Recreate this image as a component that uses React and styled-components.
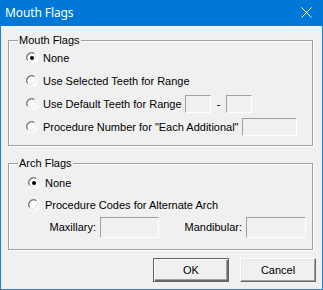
import React from "react";
import styled, { createGlobalStyle } from "styled-components";

const GlobalStyle = createGlobalStyle`
  html, body {
    margin: 0;
    padding: 0;
    background: #f0f0f0;
  }
  * {
    box-sizing: border-box;
  }
`;

const Radio = ({ checked }) => (
  <RadioBox>
    <svg width="12" height="12" viewBox="0 0 12 12">
      <path d="M0.5 7.5 A5.5 5.5 0 0 1 7.5 0.5" fill="none" stroke="#a0a0a0" strokeWidth="1" />
      <path d="M1 6 A5 5 0 0 1 6 1" fill="none" stroke="#a0a0a0" />
      <circle cx="6" cy="6" r="5" fill="#fff" />
      <path d="M1.6 8.5 A5 5 0 0 1 8.5 1.6" fill="none" stroke="#696969" strokeWidth="1" />
      <path d="M1.5 9 A5.5 5.5 0 0 0 9 1.5" fill="none" stroke="#e3e3e3" strokeWidth="1" />
      <path d="M1 10.5 A6 6 0 0 0 10.5 1" fill="none" stroke="#fff" strokeWidth="1" />
      {checked && <circle cx="6" cy="6" r="2" fill="#000" />}
    </svg>
  </RadioBox>
);

const App = () => {
  return (
    <>
      <GlobalStyle />
      <Window>
        <TitleBar>
          <Title>Mouth Flags</Title>
          <Close>
            <svg width="11" height="11" viewBox="0 0 11 11">
              <path d="M0.5 0.5 L10.5 10.5 M10.5 0.5 L0.5 10.5" stroke="#fff" strokeWidth="1" />
            </svg>
          </Close>
        </TitleBar>
        <Body>
          <Group h={106} pt={5} pl={17}>
            <Legend>Mouth Flags</Legend>
            <Row h={23}>
              <Radio checked />
              <Label>None</Label>
            </Row>
            <Row h={23}>
              <Radio />
              <Label>Use Selected Teeth for Range</Label>
            </Row>
            <Row h={23}>
              <Radio />
              <Label w={142}>Use Default Teeth for Range</Label>
              <Edit w={26} h={18} />
              <Dash>-</Dash>
              <Edit w={26} h={18} />
            </Row>
            <Row h={23}>
              <Radio />
              <Label w={199}>Procedure Number for "Each Additional"</Label>
              <Edit w={55} h={18} />
            </Row>
          </Group>
          <Group h={87} pt={8} pl={19} mt={17}>
            <Legend>Arch Flags</Legend>
            <Row h={22}>
              <Radio checked />
              <Label>None</Label>
            </Row>
            <Row h={22}>
              <Radio />
              <Label>Procedure Codes for Alternate Arch</Label>
            </Row>
            <FieldRow>
              <FieldLabel w={72}>Maxillary:</FieldLabel>
              <Edit w={59} h={21} />
              <FieldLabel w={87}>Mandibular:</FieldLabel>
              <Edit w={60} h={21} />
            </FieldRow>
          </Group>
          <Buttons>
            <Button isDefault>OK</Button>
            <Button>Cancel</Button>
          </Buttons>
        </Body>
      </Window>
    </>
  );
};

export default App;

const Window = styled.div`
  width: 323px;
  height: 290px;
  background: #f0f0f0;
  border: 1px solid #1883d7;
  border-top: none;
  display: flex;
  flex-direction: column;
  font-family: "Liberation Sans", Arial, sans-serif;
  font-size: 11px;
  color: #000;
`;

const TitleBar = styled.div`
  height: 26px;
  margin: 0 -1px;
  background: #0078d7;
  display: flex;
  align-items: center;
  justify-content: space-between;
  padding: 0 11px 1px 5px;
`;

const Title = styled.div`
  color: #fff;
  font-family: "Noto Sans", "Open Sans", sans-serif;
  font-size: 12px;
  letter-spacing: -0.1px;
`;

const Close = styled.div`
  display: flex;
  width: 11px;
  height: 11px;
`;

const Body = styled.div`
  flex: 1;
  display: flex;
  flex-direction: column;
  padding: 14px 9px 0 7px;
`;

const Group = styled.div`
  position: relative;
  height: ${(p) => p.h}px;
  margin-top: ${(p) => p.mt || 0}px;
  border: 1px solid #a0a0a0;
  box-shadow: 1px 1px 0 #fff, inset 1px 1px 0 #fff;
  padding: ${(p) => p.pt}px 0 0 ${(p) => p.pl}px;
  display: flex;
  flex-direction: column;
`;

const Legend = styled.span`
  position: absolute;
  top: -7px;
  left: 9px;
  padding: 0 1px;
  background: #f0f0f0;
  line-height: 13px;
`;

const Row = styled.div`
  height: ${(p) => p.h}px;
  display: flex;
  align-items: center;
`;

const RadioBox = styled.span`
  display: flex;
  width: 12px;
  height: 12px;
  flex-shrink: 0;
`;

const Label = styled.span`
  margin-left: 5px;
  white-space: nowrap;
  width: ${(p) => (p.w ? `${p.w}px` : "auto")};
  flex-shrink: 0;
`;

const Edit = styled.span`
  display: block;
  width: ${(p) => p.w}px;
  height: ${(p) => p.h}px;
  background: #f0f0f0;
  border: 1px solid;
  border-color: #a0a0a0 #fff #fff #a0a0a0;
  flex-shrink: 0;
`;

const Dash = styled.span`
  width: 15px;
  text-align: center;
`;

const FieldRow = styled.div`
  height: 22px;
  display: flex;
  align-items: center;
`;

const FieldLabel = styled.span`
  width: ${(p) => p.w}px;
  text-align: right;
  padding-right: 4px;
  white-space: nowrap;
  flex-shrink: 0;
`;

const Buttons = styled.div`
  display: flex;
  justify-content: flex-end;
  gap: 11px;
  margin: 8px -3px 0 0;
`;

const Button = styled.div`
  width: 76px;
  height: 24px;
  display: flex;
  align-items: center;
  justify-content: center;
  font-size: 11px;
  border: 1px solid;
  border-color: ${(p) => (p.isDefault ? "#646464" : "#fff #696969 #696969 #fff")};
  box-shadow: ${(p) =>
    p.isDefault
      ? "inset 1px 1px 0 #fff, inset -1px -1px 0 #696969, inset -2px -2px 0 #a0a0a0"
      : "inset -1px -1px 0 #a0a0a0, inset 1px 1px 0 #e3e3e3"};
`;
